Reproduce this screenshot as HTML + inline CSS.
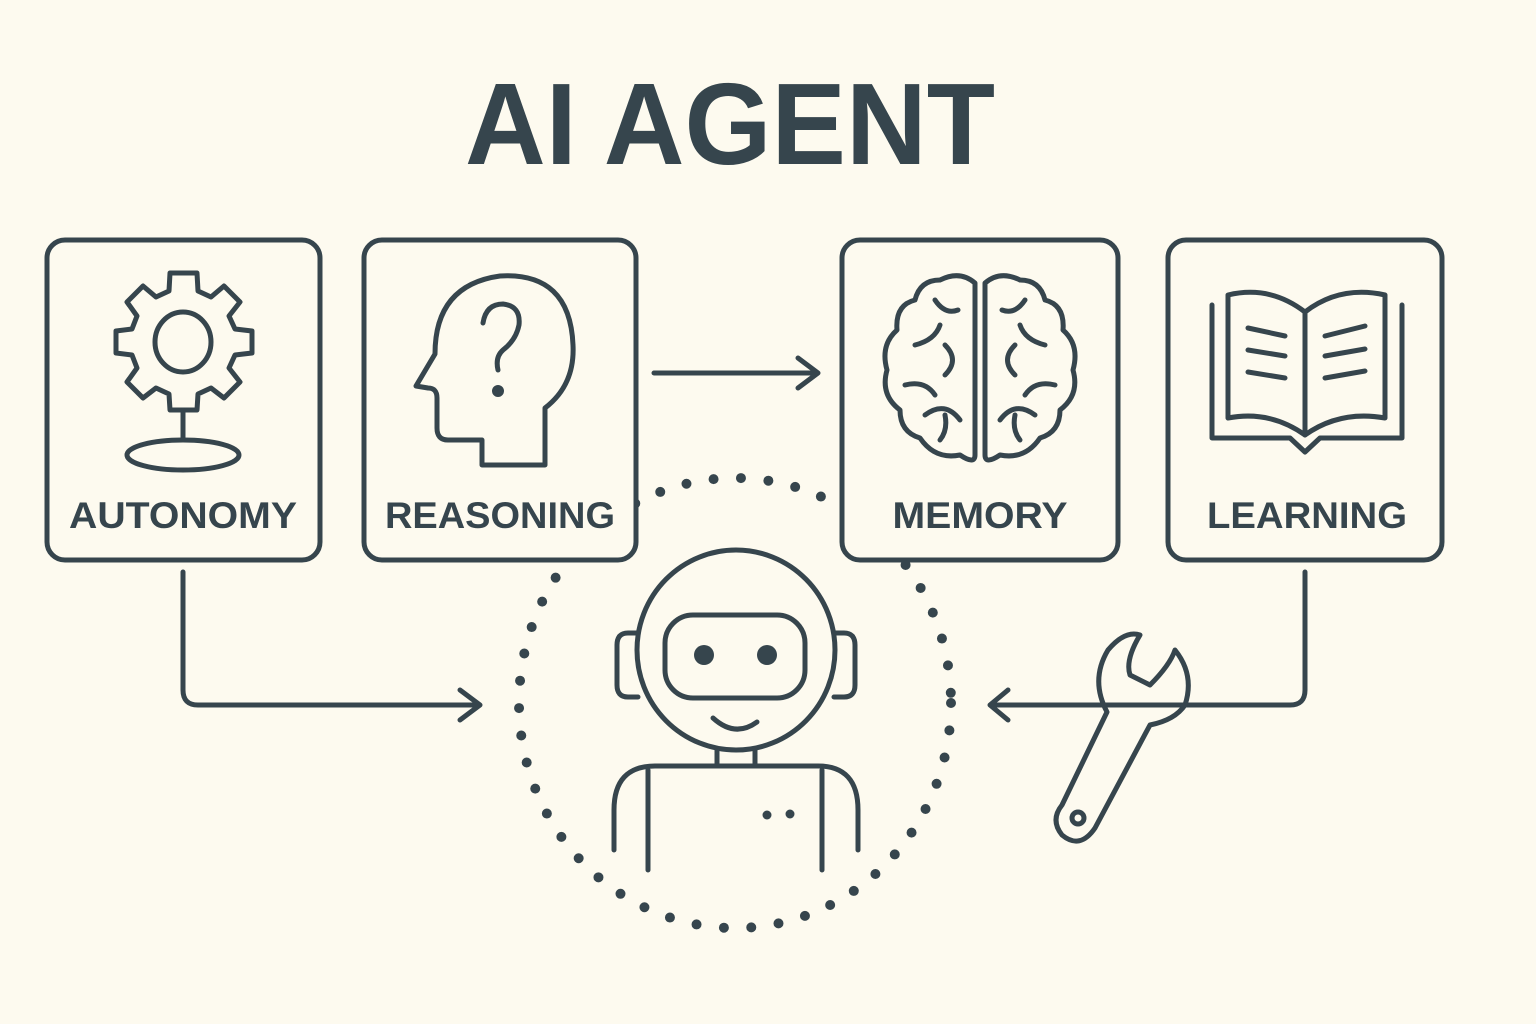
<!DOCTYPE html>
<html><head><meta charset="utf-8"><style>
html,body{margin:0;padding:0;background:#fdfaef;}
svg{display:block}
text{font-family:"Liberation Sans",sans-serif;font-weight:bold;fill:#36454d}
</style></head><body>
<svg width="1536" height="1024" viewBox="0 0 1536 1024" xmlns="http://www.w3.org/2000/svg">
<rect width="1536" height="1024" fill="#fdfaef"/>
<g fill="none" stroke="#36454d" stroke-width="5" stroke-linecap="round" stroke-linejoin="round">
<ellipse cx="735" cy="703" rx="216" ry="225" stroke-width="10" stroke-dasharray="0 27.5"/>
</g>
<text x="730" y="164" font-size="116" text-anchor="middle" textLength="530" lengthAdjust="spacingAndGlyphs">AI AGENT</text>
<g fill="#fdfaef" stroke="#36454d" stroke-width="5">
<rect x="47" y="240" width="273" height="320" rx="18"/>
<rect x="364" y="240" width="272" height="320" rx="18"/>
<rect x="842" y="240" width="276" height="320" rx="18"/>
<rect x="1168" y="240" width="274" height="320" rx="18"/>
</g>
<text x="183" y="528" font-size="37" text-anchor="middle" textLength="228" lengthAdjust="spacingAndGlyphs">AUTONOMY</text>
<text x="500" y="528" font-size="37" text-anchor="middle" textLength="230" lengthAdjust="spacingAndGlyphs">REASONING</text>
<text x="980" y="528" font-size="37" text-anchor="middle" textLength="175" lengthAdjust="spacingAndGlyphs">MEMORY</text>
<text x="1307" y="528" font-size="37" text-anchor="middle" textLength="200" lengthAdjust="spacingAndGlyphs">LEARNING</text>
<g fill="none" stroke="#36454d" stroke-width="5" stroke-linecap="round" stroke-linejoin="round">
<path d="M170,273 L197,273 L198,291 L211,297 L224,286 L240,302 L229,316 L235,329 L252,331 L252,353 L235,355 L229,368 L240,382 L224,398 L211,388 L198,394 L197,410 L170,410 L169,394 L156,388 L143,398 L127,382 L137,368 L132,355 L116,353 L116,331 L132,329 L137,316 L127,302 L143,286 L156,297 L169,291 Z"/>
<ellipse cx="183" cy="342" rx="28" ry="30"/>
<path d="M183,410 L183,438"/>
<ellipse cx="183" cy="455" rx="56" ry="15"/>
<path d="M482,465 L482,440 L448,440 Q437,440 437,428 L437,398 Q437,388 428,388 L416,386 L435,354 Q435,285 500,276 Q570,272 573,345 Q575,385 545,408 L545,465 Z"/>
<path d="M483,323 Q486,304 503,304 Q521,306 519,325 Q516,340 503,350 Q495,357 498,370"/>
<circle cx="498" cy="391" r="3.5" fill="#36454d"/>
<path d="M654,373 L818,373 M798,358 L818,373 L798,388"/>
<path d="M183,572 L183,690 Q183,705 198,705 L480,705 M460,690 L480,705 L460,720"/>
<path d="M1305,572 L1305,690 Q1305,705 1290,705 L990,705 M1008,690 L990,705 L1008,720"/>
<path d="M975,283 Q960,270 940,280 Q920,280 915,300 Q895,305 897,330 Q880,345 887,370 Q880,395 900,410 Q900,432 920,438 Q935,460 960,455 Q975,465 975,455 Z"/>
<path d="M985,283 Q1000,270 1020,280 Q1040,280 1045,300 Q1065,305 1063,330 Q1080,345 1073,370 Q1080,395 1060,410 Q1060,432 1040,438 Q1025,460 1000,455 Q985,465 985,455 Z"/>
<path d="M935,300 Q945,315 958,310 M915,345 Q935,340 940,325 M905,385 Q925,380 935,395 M945,345 Q960,360 945,375 M925,415 Q945,400 960,420 M940,440 Q948,430 945,415"/>
<path d="M1025,300 Q1015,315 1002,310 M1045,345 Q1025,340 1020,325 M1055,385 Q1035,380 1025,395 M1015,345 Q1000,360 1015,375 M1035,415 Q1015,400 1000,420 M1020,440 Q1012,430 1015,415"/>
<path d="M1228,295 Q1270,285 1305,312 L1305,435 Q1270,410 1228,418 Z"/>
<path d="M1385,295 Q1340,285 1305,312 M1385,295 L1385,418 Q1340,410 1305,435"/>
<path d="M1212,305 L1212,438 L1290,438 L1305,452 L1320,438 L1402,438 L1402,305"/>
<path d="M1248,328 L1285,336 M1248,350 L1285,356 M1248,372 L1285,378 M1325,336 L1365,326 M1325,356 L1365,349 M1325,378 L1365,371"/>
<ellipse cx="736" cy="650" rx="99" ry="100"/>
<rect x="665" y="615" width="140" height="83" rx="28"/>
<path d="M638,633 L628,633 Q617,633 617,645 L617,685 Q617,697 628,697 L638,697"/>
<path d="M834,633 L844,633 Q855,633 855,645 L855,685 Q855,697 844,697 L834,697"/>
<path d="M713,718 Q735,738 757,722"/>
<path d="M717,749 L717,766 M755,749 L755,766"/>
<path d="M614,850 L614,810 Q614,766 655,766 L818,766 Q858,766 858,810 L858,850"/>
<path d="M648,770 L648,870 M822,770 L822,870"/>
<path d="M1107,712 Q1090,680 1108,650 Q1125,630 1140,635 Q1125,660 1130,675 L1150,685 Q1170,665 1175,650 Q1195,675 1185,705 Q1175,720 1150,725 L1095,828 Q1080,850 1062,835 Q1050,820 1062,805 Z"/>
<circle cx="1078" cy="818" r="6"/>
</g>
<g fill="#36454d">
<circle cx="704" cy="655" r="10"/><circle cx="767" cy="655" r="10"/>
<circle cx="767" cy="815" r="4.5"/><circle cx="790" cy="814" r="4.5"/>
</g>
</svg>
</body></html>
